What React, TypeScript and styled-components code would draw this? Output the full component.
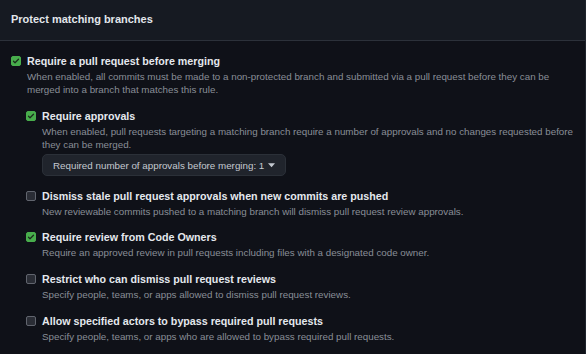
import React from "react";
import styled, { createGlobalStyle } from "styled-components";

const Global = createGlobalStyle`
  html, body { margin: 0; padding: 0; background: #0f1118; }
  body { font-family: "Liberation Sans", Arial, sans-serif; -webkit-font-smoothing: antialiased; }
`;

const Panel = styled.section`
  width: 586px;
  height: 354px;
  box-sizing: border-box;
  background: #0f1118;
  border-right: 1px solid #1f242c;
  overflow: hidden;
`;

const Header = styled.header`
  height: 41px;
  box-sizing: border-box;
  display: flex;
  align-items: center;
  padding: 0 11px 2px;
  background: #161a22;
  border-bottom: 1px solid #2c313a;
  color: #e2e6eb;
  font-size: 11px;
  font-weight: 700;
`;

const Body = styled.div`
  display: flex;
  flex-direction: column;
  gap: 11.5px;
  padding: 11.5px 6px 0 11px;
`;

const Item = styled.div<{ $indent?: boolean }>`
  display: flex;
  gap: 6px;
  align-items: flex-start;
  margin-left: ${(p) => (p.$indent ? "15px" : "0")};
`;

const Box = styled.span<{ $checked?: boolean }>`
  flex: none;
  width: 10px;
  height: 10px;
  margin-top: 3px;
  box-sizing: border-box;
  border-radius: 2px;
  display: flex;
  align-items: center;
  justify-content: center;
  background: ${(p) => (p.$checked ? "#48ad4c" : "#2a2d35")};
  border: 1px solid ${(p) => (p.$checked ? "#48ad4c" : "#61656e")};
`;

const Content = styled.div`
  display: flex;
  flex-direction: column;
  min-width: 0;
  flex: 1;
`;

const Title = styled.div`
  color: #e4e8ed;
  font-size: 10.7px;
  font-weight: 700;
  line-height: 17px;
`;

const Desc = styled.div`
  color: #898e97;
  font-size: 9.8px;
  line-height: 13.3px;
`;

const Children = styled.div`
  display: flex;
  flex-direction: column;
  gap: 11.5px;
  margin-top: 11.5px;
  margin-left: -16px;
`;

const Dropdown = styled.button`
  align-self: flex-start;
  margin-top: 3px;
  height: 22px;
  padding: 0 10px;
  box-sizing: border-box;
  display: flex;
  align-items: center;
  gap: 4px;
  white-space: nowrap;
  background: #20242c;
  border: 1px solid #2b3038;
  border-radius: 5px;
  color: #c4c9d0;
  font-family: "Liberation Sans", Arial, sans-serif;
  font-size: 9.8px;
  font-weight: 400;
`;

const Check = () => (
  <svg width="8" height="8" viewBox="0 0 16 16" fill="none">
    <path d="M3 8.5l3 3 7-7" stroke="#1b2a1c" strokeWidth="2.4" strokeLinecap="round" strokeLinejoin="round" />
  </svg>
);

const Caret = () => (
  <svg width="7" height="5" viewBox="0 0 8 5">
    <path d="M0 0h8L4 4.5z" fill="#c4c9d0" />
  </svg>
);

type Rule = {
  title: string;
  desc: React.ReactNode;
  checked?: boolean;
};

const Option: React.FC<Rule & { indent?: boolean; children?: React.ReactNode }> = ({
  title,
  desc,
  checked,
  indent,
  children,
}) => (
  <Item $indent={indent}>
    <Box $checked={checked}>{checked && <Check />}</Box>
    <Content>
      <Title>{title}</Title>
      <Desc>{desc}</Desc>
      {children}
    </Content>
  </Item>
);

const subRules: Rule[] = [
  {
    title: "Dismiss stale pull request approvals when new commits are pushed",
    desc: "New reviewable commits pushed to a matching branch will dismiss pull request review approvals.",
  },
  {
    title: "Require review from Code Owners",
    desc: "Require an approved review in pull requests including files with a designated code owner.",
    checked: true,
  },
  {
    title: "Restrict who can dismiss pull request reviews",
    desc: "Specify people, teams, or apps allowed to dismiss pull request reviews.",
  },
  {
    title: "Allow specified actors to bypass required pull requests",
    desc: "Specify people, teams, or apps who are allowed to bypass required pull requests.",
  },
];

export default function App() {
  return (
    <>
      <Global />
      <Panel>
        <Header>Protect matching branches</Header>
        <Body>
          <Option
            checked
            title="Require a pull request before merging"
            desc="When enabled, all commits must be made to a non-protected branch and submitted via a pull request before they can be merged into a branch that matches this rule."
          >
            <Children>
              <Option
                indent
                checked
                title="Require approvals"
                desc="When enabled, pull requests targeting a matching branch require a number of approvals and no changes requested before they can be merged."
              >
                <Dropdown>
                  Required number of approvals before merging: 1 <Caret />
                </Dropdown>
              </Option>
              {subRules.map((r) => (
                <Option key={r.title} indent {...r} />
              ))}
            </Children>
          </Option>
        </Body>
      </Panel>
    </>
  );
}
